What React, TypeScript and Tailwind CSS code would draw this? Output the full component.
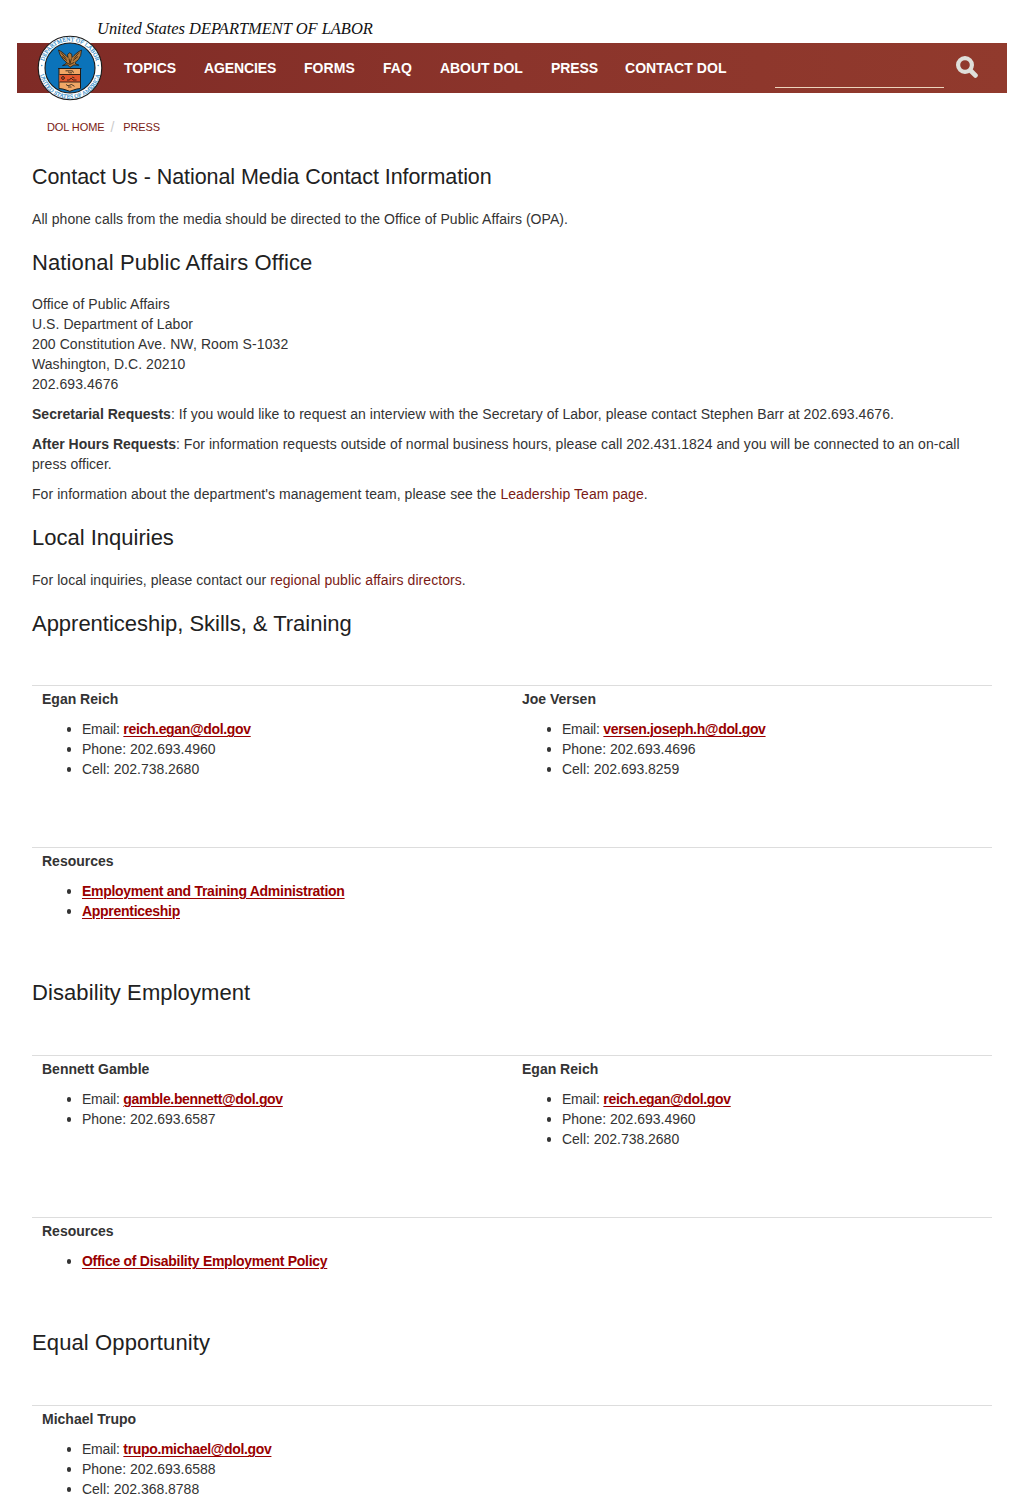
import React from "react";

type Contact = { name: string; email: string; numbers: string[] };
type Section = { title: string; heading: string; contacts: Contact[]; resources: string[] };

const NAV = [
  { label: "TOPICS", box: "w-[80px]" },
  { label: "AGENCIES", box: "w-[100px] tracking-[-0.12px]" },
  { label: "FORMS", box: "w-[79px]" },
  { label: "FAQ", box: "w-[57px]" },
  { label: "ABOUT DOL", box: "w-[111px] tracking-[-0.05px]" },
  { label: "PRESS", box: "w-[74px] tracking-[-0.1px]" },
  { label: "CONTACT DOL", box: "w-[110px]" },
];

const SECTIONS: Section[] = [
  {
    title: "Apprenticeship, Skills, & Training",
    heading: "mb-[48px] tracking-[-0.02px]",
    contacts: [
      { name: "Egan Reich", email: "reich.egan@dol.gov", numbers: ["Phone: 202.693.4960", "Cell: 202.738.2680"] },
      { name: "Joe Versen", email: "versen.joseph.h@dol.gov", numbers: ["Phone: 202.693.4696", "Cell: 202.693.8259"] },
    ],
    resources: ["Employment and Training Administration", "Apprenticeship"],
  },
  {
    title: "Disability Employment",
    heading: "mb-[49px] tracking-[0.09px]",
    contacts: [
      { name: "Bennett Gamble", email: "gamble.bennett@dol.gov", numbers: ["Phone: 202.693.6587"] },
      { name: "Egan Reich", email: "reich.egan@dol.gov", numbers: ["Phone: 202.693.4960", "Cell: 202.738.2680"] },
    ],
    resources: ["Office of Disability Employment Policy"],
  },
  {
    title: "Equal Opportunity",
    heading: "mb-[49px] tracking-[0.12px]",
    contacts: [
      { name: "Michael Trupo", email: "trupo.michael@dol.gov", numbers: ["Phone: 202.693.6588", "Cell: 202.368.8788"] },
    ],
    resources: [],
  },
];

function Seal() {
  return (
    <svg viewBox="0 0 66 66" className="absolute left-[20px] -top-[8px] size-[66px]">
      <defs>
        <path id="seal-top" d="M6.2 33 A26.8 26.8 0 0 1 59.8 33" />
        <path id="seal-bottom" d="M2.4 33 A30.6 30.6 0 0 0 63.6 33" />
      </defs>
      <circle cx="33" cy="33" r="31.8" fill="#fff" stroke="#1a1a1a" strokeWidth="1.1" />
      <circle cx="33" cy="33" r="25" fill="#0b73ba" stroke="#1a1a1a" strokeWidth="1.1" />
      <g fill="#1f86c6" stroke="#1f86c6" strokeWidth=".15" fontFamily="Liberation Serif, serif" fontSize="5.8" textAnchor="middle">
        <text style={{ letterSpacing: "0.1px" }}>
          <textPath href="#seal-top" startOffset="50%">DEPARTMENT OF LABOR</textPath>
        </text>
        <text style={{ letterSpacing: "0.1px" }}>
          <textPath href="#seal-bottom" startOffset="50%">UNITED STATES OF AMERICA</textPath>
        </text>
      </g>
      <circle cx="4.8" cy="30.5" r=".7" fill="#2e8fc9" />
      <circle cx="61.2" cy="30.5" r=".7" fill="#2e8fc9" />
      <path d="M21.5 15l3.5 2 4 3.5 2 2-.5-3 2-1.7 2.2 1.2.3 3.5 2-2 4-3.5 3.5-2-.8 5.5-2.2 4-3.5 3 .8 1.5 3 1.2-5-.2L33 32.3l-2.5-2.5-5 .8 3-1.5 1-1.8-3.5-3-3-4.5z" fill="#b37a3c" stroke="#1d1a14" strokeWidth=".8" />
      <path d="M24 17.5l5 6M25 21.5l5 4M42 17.5l-5 6M41 21.5l-5 4M32 23.5l1 5 1.5-5M29 27.5l4 2 4-2" fill="none" stroke="#2b1c0d" strokeWidth=".8" />
      <path d="M22 33.5h21.5v20q-4 .3-7 1.5l-3.7 1.3L29 55q-3-1.2-7-1.5z" fill="#f0a766" stroke="#211a14" strokeWidth="1" />
      <path d="M22.5 39.5h20.5v7.5H22.5z" fill="#e2582e" />
      <path d="M21 33.5h23.5M22.5 39.5h20.5M22.5 47h20.5" stroke="#211a14" strokeWidth=".9" />
      <path d="M28.5 35.8h7l1 2M31 36.8l1.5 1h2.5M29 49.5l2 1.3 3.5-1.3 3 1.8M31 52h3.5M30 45h2.5l1.5-2 2 2h3.5M35 42l2.5 1" fill="none" stroke="#211a14" strokeWidth=".8" />
      <circle cx="26" cy="43" r="1.4" fill="none" stroke="#211a14" strokeWidth=".9" />
    </svg>
  );
}

function Heading({ children, className = "" }: { children: React.ReactNode; className?: string }) {
  return (
    <h2 className={`flex items-center leading-[26px] whitespace-nowrap text-[#212121] ${className}`}>{children}</h2>
  );
}

function Item({ children }: { children: React.ReactNode }) {
  return (
    <li className="flex items-center whitespace-nowrap">
      <span className="mt-px mr-[10.7px] ml-[0.7px] size-[4.6px] rounded-full bg-[#333]" />
      <span>{children}</span>
    </li>
  );
}

function ContactSection({ section }: { section: Section }) {
  return (
    <section>
      <Heading className={`h-[26px] text-[22px] ${section.heading}`}>{section.title}</Heading>
      <div className="flex h-[162px] border-t border-[#ddd] pt-[3px]">
        {section.contacts.map((c) => (
          <div key={c.name} className="w-1/2 pl-2.5">
            <p className="font-bold tracking-normal">{c.name}</p>
            <ul className="mt-2.5 pl-6 tracking-[-0.02px]">
              <Item>
                <span className="tracking-[-0.2px]">Email: </span>
                <a href="#" className="font-bold tracking-[-0.34px] text-[#990000] underline decoration-1 underline-offset-2">{c.email}</a>
              </Item>
              {c.numbers.map((n) => <Item key={n}>{n}</Item>)}
            </ul>
          </div>
        ))}
      </div>
      {section.resources.length > 0 && (
        <div className="border-t border-[#ddd] pt-[3px] pb-[59px] pl-2.5">
          <p className="font-bold tracking-normal">Resources</p>
          <ul className="mt-2.5 pl-6">
            {section.resources.map((r) => (
              <Item key={r}>
                <a href="#" className="font-bold tracking-[-0.28px] text-[#990000] underline decoration-1 underline-offset-2">{r}</a>
              </Item>
            ))}
          </ul>
        </div>
      )}
    </section>
  );
}

export default function App() {
  return (
    <div className="h-[1500px] w-[1024px] overflow-hidden bg-white font-['Liberation_Sans',Arial,sans-serif] text-[14px] leading-5 tracking-[0.06px] text-[#333]">
      <div className="h-[43px] pt-[19px] pl-[97px] font-['Liberation_Serif',serif] text-[16.5px] leading-[20px] tracking-[-0.04px] text-[#111] italic">
        United States DEPARTMENT OF LABOR
      </div>
      <header className="relative ml-[17px] flex h-[50px] w-[990px] items-center bg-linear-to-r from-[#7f2b26] via-[#8b342b] to-[#913a2d] pl-[107px]">
        <Seal />
        <nav className="flex text-[14px] font-bold whitespace-nowrap text-white">
          {NAV.map((n) => <a key={n.label} href="#" className={n.box}>{n.label}</a>)}
        </nav>
        <div className="ml-[40px] h-[45px] w-[169px] self-start border-b border-[#ecd5bd]" />
        <svg viewBox="0 0 22 22" className="mb-[2px] ml-[12px] size-[22px]" fill="none" stroke="#dfdfda">
          <circle cx="9" cy="9" r="6.9" strokeWidth="4.2" />
          <path d="M14.5 14.5l4.9 4.9" strokeWidth="4.8" strokeLinecap="round" />
        </svg>
      </header>
      <div className="mt-[24px] flex h-5 pl-[47px] text-[11px] tracking-[-0.1px] text-[#7a1a14]">
        <span>DOL HOME</span>
        <span className="mr-[9px] ml-[6px] text-[14px] text-[#ccc]">/</span>
        <span>PRESS</span>
      </div>
      <main className="px-8">
        <Heading className="mt-[27px] h-[26px] text-[21.5px] tracking-[-0.06px]">Contact Us - National Media Contact Information</Heading>
        <p className="mt-[19px]">All phone calls from the media should be directed to the Office of Public Affairs (OPA).</p>
        <Heading className="h-[65px] pt-[2px] text-[22px] tracking-[0.12px]">National Public Affairs Office</Heading>
        <address className="not-italic">
          Office of Public Affairs<br />
          U.S. Department of Labor<br />
          <span className="tracking-[0.1px]">200 Constitution Ave. NW, Room S-1032</span><br />
          Washington, D.C. 20210<br />
          202.693.4676
        </address>
        <p className="mt-2.5"><strong className="tracking-[0.02px]">Secretarial Requests</strong>: If you would like to request an interview with the Secretary of Labor, please contact Stephen Barr at 202.693.4676.</p>
        <p className="mt-2.5 tracking-[0.05px]"><strong className="tracking-normal">After Hours Requests</strong>: For information requests outside of normal business hours, please call 202.431.1824 and you will be connected to an on-call<br />press officer.</p>
        <p className="mt-2.5">For information about the department's management team, please see the <a href="#" className="text-[#7a1a14]">Leadership Team page</a>.</p>
        <Heading className="h-[66px] pt-[2px] text-[22px] tracking-normal">Local Inquiries</Heading>
        <p className="mb-[21px]">For local inquiries, please contact our <a href="#" className="text-[#7a1a14]">regional public affairs directors</a>.</p>
        {SECTIONS.map((s) => <ContactSection key={s.title} section={s} />)}
      </main>
    </div>
  );
}
